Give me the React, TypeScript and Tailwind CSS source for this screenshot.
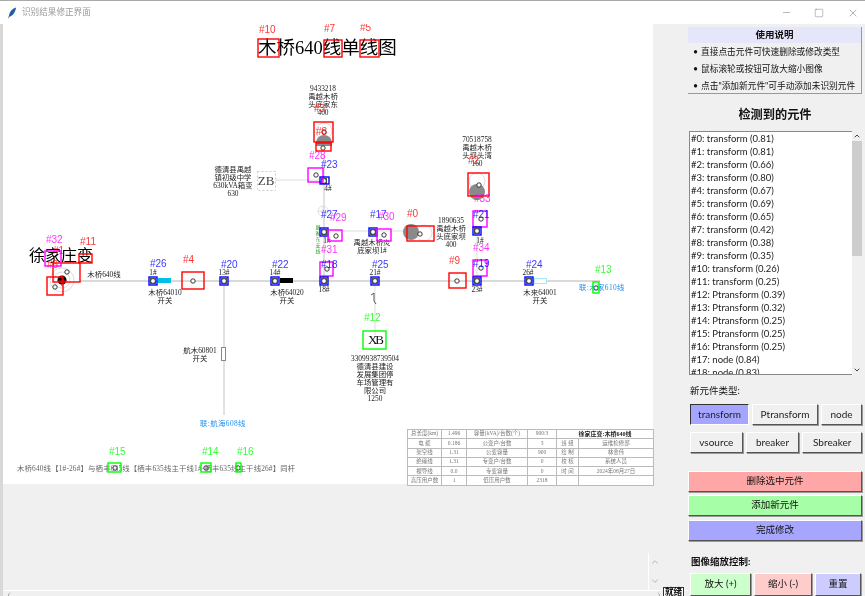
import { Minus, Square, X, ChevronUp, ChevronDown, ChevronLeft, ChevronRight } from 'lucide-react';

const RED = '#ff0000';
const MAGENTA = '#ff00ff';
const BLUE = '#0000ff';
const GREEN = '#00ff00';

// [label, colour, x0, y0, x1, y1, label x, label centre y] in page pixels
const boxes: [string, string, number, number, number, number, number, number][] = [
  ['#10', RED, 258, 39, 279, 57, 259, 29],
  ['#7', RED, 324, 40, 342, 57, 324, 28],
  ['#5', RED, 360, 40, 379, 57, 360, 27],
  ['#3', RED, 314, 122, 333, 142, 314, 108],
  ['#8', RED, 316, 143, 331, 151, 316, 131],
  ['#28', MAGENTA, 308, 168, 323, 182, 309, 155],
  ['#23', BLUE, 320, 177, 329, 184, 321, 164],
  ['#27', BLUE, 320, 228, 328, 236, 321, 214],
  ['#29', MAGENTA, 328, 230, 342, 241, 330, 217],
  ['#17', BLUE, 369, 228, 377, 236, 370, 214],
  ['#30', MAGENTA, 377, 229, 391, 241, 378, 216],
  ['#0', RED, 407, 226, 434, 241, 407, 213],
  ['#2', RED, 468, 173, 489, 196, 468, 160],
  ['#33', MAGENTA, 473, 211, 487, 227, 474, 198],
  ['#21', BLUE, 473, 227, 481, 235, 473, 214],
  ['#34', MAGENTA, 473, 260, 487, 276, 473, 247],
  ['#19', BLUE, 473, 277, 481, 285, 473, 263],
  ['#9', RED, 449, 273, 466, 288, 449, 260],
  ['#24', BLUE, 525, 277, 533, 285, 526, 264],
  ['#13', GREEN, 593, 282, 599, 293, 595, 269],
  ['#31', MAGENTA, 320, 262, 333, 276, 321, 249],
  ['#18', BLUE, 320, 277, 328, 285, 321, 264],
  ['#25', BLUE, 371, 277, 379, 285, 372, 264],
  ['#22', BLUE, 271, 277, 279, 285, 272, 264],
  ['#20', BLUE, 220, 277, 228, 285, 221, 264],
  ['#4', RED, 182, 272, 204, 289, 183, 259],
  ['#26', BLUE, 149, 277, 157, 285, 150, 263],
  ['#1', RED, 53, 263, 80, 282, 53, 250],
  ['#6', RED, 47, 277, 63, 295, 47, 264],
  ['#11', RED, 79, 254, 92, 263, 80, 241],
  ['#32', MAGENTA, 45, 251, 61, 266, 46, 239],
  ['#12', GREEN, 363, 331, 386, 349, 364, 317],
  ['#15', GREEN, 108, 463, 121, 472, 109, 451],
  ['#14', GREEN, 201, 463, 211, 472, 202, 451],
  ['#16', GREEN, 236, 463, 241, 472, 237, 451],
];

// [x centre, first line y, lines]
const captions: [number, number, string[]][] = [
  [323, 88, ['9433218', '禹越木桥', '头底家东', '400']],
  [233, 169, ['德清县禹越', '镇初级中学', '630kVA箱变', '630']],
  [477, 139, ['70518758', '禹越木桥', '头坝头湾', '160']],
  [451, 220, ['1890635', '禹越木桥', '头底家坝', '400']],
  [104, 274, ['木桥640线']],
  [165, 292, ['木桥64010', '开关']],
  [287, 292, ['木桥64020', '开关']],
  [372, 242, ['禹越木桥炎', '底家坝1#']],
  [540, 292, ['木来64001', '开关']],
  [200, 350, ['航木60801', '开关']],
  [375, 358, ['3309938739504', '德清县建设', '发展集团停', '车场管理有', '限公司', '1250']],
  [153, 272, ['1#']],
  [224, 272, ['13#']],
  [275, 272, ['14#']],
  [375, 272, ['21#']],
  [528, 272, ['26#']],
  [324, 289, ['18#']],
  [477, 289, ['23#']],
  [480, 240, ['1#']],
  [328, 188, ['4#']],
  [327, 240, ['1#']],
];

const dots: [number, number][] = [
  [316, 175], [336, 236], [384, 235], [327, 269], [481, 219], [481, 268],
  [115, 468], [206, 468], [238, 468], [596, 288], [324, 132], [323, 148],
  [479, 185], [420, 234], [67, 272], [55, 287], [193, 281], [457, 281],
];

const hubs: [number, number][] = [
  [324, 181], [324, 232], [373, 232], [477, 231], [477, 281], [529, 281],
  [324, 281], [375, 281], [275, 281], [224, 281], [153, 281],
];

const table = [
  ['总长度(km)', '1.496', '容量(kVA)/台数(个)', '900/3', '', ''],
  ['电 缆', '0.186', '公变户/台数', '3', '班 组', '运维检修部'],
  ['架空线', '1.31', '公变容量', '900', '绘 制', '林金伟'],
  ['绝缘线', '1.31', '专变户/台数', '0', '校 核', '系统人员'],
  ['裸导线', '0.0', '专变容量', '0', '时 间', '2024年08月27日'],
  ['高压用户数', '1', '低压用户数', '2318', '', ''],
];

const kinds = ['transform', 'transform', 'transform', 'transform', 'transform', 'transform', 'transform', 'transform', 'transform', 'transform', 'transform', 'transform', 'Ptransform', 'Ptransform', 'Ptransform', 'Ptransform', 'Ptransform', 'node', 'node'];
const scores = ['0.81', '0.81', '0.66', '0.80', '0.67', '0.69', '0.65', '0.42', '0.38', '0.35', '0.26', '0.25', '0.39', '0.32', '0.25', '0.25', '0.25', '0.84', '0.83'];

const raised = 'border border-t-white border-l-white border-r-[#555] border-b-[#555] shadow-[1px_1px_0_#999]';

function Diagram() {
  return (
    <svg viewBox="3 24 650 460" className="absolute inset-0 h-full w-full font-['Liberation_Serif','Noto_Sans_CJK_SC',serif]">
      {/* wires */}
      <g stroke="#c4c4c4" fill="none">
        <path d="M80 281H600" stroke="#b4b4b4" />
        <path d="M224 281V415" />
        <path d="M324 155V281" />
        <path d="M324 231H412" stroke="#ddd" />
        <path d="M477 235V281" stroke="#ddd" />
        <path d="M375 285V335" stroke="#ddd" />
        <path d="M275 180H320" stroke="#ddd" />
      </g>
      {/* switches */}
      <rect x="158" y="278" width="13" height="5" fill="#00bfe6" />
      <rect x="280" y="278" width="13" height="5" fill="#000" />
      <rect x="534.5" y="278.5" width="12" height="5" fill="#fff" stroke="#a6e8f5" />
      <rect x="221.5" y="347.5" width="4" height="13" fill="#fff" stroke="#888" />
      <rect x="257.5" y="171.5" width="18" height="19" fill="#fff" stroke="#ccc" strokeDasharray="2 2" />
      <text x="266" y="185" textAnchor="middle" fontSize="13" fill="#444">ZB</text>
      <text x="375" y="344" textAnchor="middle" fontSize="13" letterSpacing="-2" fill="#111">XB</text>
      {/* transformers */}
      <g fill="none" stroke="#ddd">
        <circle cx="62" cy="280" r="12" />
        <circle cx="62" cy="280" r="8" />
        <circle cx="324" cy="131" r="8" />
        <circle cx="477" cy="181" r="8" />
        <circle cx="424" cy="233" r="8" />
        <circle cx="323" cy="211" r="5" />
        <path d="M323 206V216M318 211H328" />
      </g>
      <circle cx="62" cy="280" r="4.5" fill="#000" />
      <path d="M57 281H67M62 276V286" stroke={RED} />
      <path d="M316 143a8 8 0 0 1 16 0v3h-16Z" fill="#8a8a8a" />
      <circle cx="477" cy="192" r="8" fill="#8a8a8a" />
      <circle cx="411" cy="232" r="8" fill="#8a8a8a" />
      <path d="M371 295l3-2v8l2 3" stroke="#555" fill="none" />
      {/* nodes */}
      {hubs.map(([x, y]) => (
        <g key={`${x}-${y}`}>
          <rect x={x - 3} y={y - 3} width="6" height="6" fill="#555" />
          <circle cx={x} cy={y} r="2.4" fill="#fff" stroke="#222" strokeWidth="0.8" />
        </g>
      ))}
      {dots.map(([x, y]) => (
        <circle key={`${x}-${y}`} cx={x} cy={y} r="2.2" fill="#fff" stroke="#222" strokeWidth="0.9" />
      ))}
      {/* big titles */}
      <text x="258" y="54" fontSize="18.5" fill="#000">木桥640线单线图</text>
      <text x="29" y="261" fontSize="16" fill="#000">徐家庄变</text>
      {/* captions */}
      <g fontSize="7.4" fill="#222" textAnchor="middle">
        {captions.map(([x, y, lines]) =>
          lines.map((line, i) => (
            <text key={`${x}-${y}-${i}`} x={x} y={y + i * 8 + 3}>{line}</text>
          )),
        )}
      </g>
      <g fontSize="5" fill="#2da52d" textAnchor="middle">
        {['屠', '家', '东', '支', '线'].map((c, i) => (
          <text key={c} x="318" y={229 + i * 6}>{c}</text>
        ))}
      </g>
      <g fontSize="7.4" fill="#1e8ff0">
        <text x="579" y="290" letterSpacing="0.4">联:木家610线</text>
        <text x="200" y="426" letterSpacing="0.4">联:航海608线</text>
      </g>
      <text x="17" y="471" fontSize="7.4" letterSpacing="0.15" fill="#666">木桥640线【1#-26#】与栖丰635线【栖丰635线主干线1#-栖丰635线主干线26#】同杆</text>
      {/* detection boxes */}
      <g fontFamily="'Liberation Sans', sans-serif" fontSize="10">
        {boxes.map(([label, color, x0, y0, x1, y1, lx, ly]) => (
          <g key={label}>
            <rect x={x0} y={y0} width={x1 - x0} height={y1 - y0} fill="none" stroke={color} strokeWidth="1.4" />
            <text x={lx} y={ly + 4} fill={color} fillOpacity="0.8">{label}</text>
          </g>
        ))}
      </g>
    </svg>
  );
}

function SummaryTable() {
  return (
    <table className="absolute left-[404px] top-[405px] w-[246px] table-fixed border-collapse bg-white text-center font-['Liberation_Serif','Noto_Sans_CJK_SC',serif] text-[5.5px] text-[#777]">
      <colgroup>
        <col className="w-[34px]" />
        <col className="w-[25px]" />
        <col className="w-[61px]" />
        <col className="w-[29px]" />
        <col className="w-[22px]" />
        <col className="w-[75px]" />
      </colgroup>
      <tbody>
        {table.map((row, r) => (
          <tr key={r} className="h-[9.3px]">
            {r === 0 ? (
              <>
                {row.slice(0, 4).map((c, i) => (
                  <td key={i} className="border border-[#bbb] p-0 leading-none">{c}</td>
                ))}
                <td colSpan={2} className="border border-[#bbb] p-0 text-[6px] leading-none font-bold text-[#222]">徐家庄变:木桥640线</td>
              </>
            ) : (
              row.map((c, i) => (
                <td key={i} className="border border-[#bbb] p-0 leading-none">{c}</td>
              ))
            )}
          </tr>
        ))}
      </tbody>
    </table>
  );
}

function TypeButton({ label, active, width }: { label: string; active?: boolean; width: string }) {
  return (
    <button
      className={`${width} flex h-[21px] items-center justify-center text-[10px] text-[#222] ${
        active
          ? 'border border-t-[#333] border-l-[#333] border-r-white border-b-white bg-[#a5a5ff]'
          : `${raised} bg-[#f0f0f0]`
      }`}
    >
      {label}
    </button>
  );
}

export default function App() {
  return (
    <div className="flex h-[596px] w-[865px] flex-col overflow-hidden border-t border-[#aaa] bg-[#f0f0f0] font-['Lato','Noto_Sans_CJK_SC',sans-serif] text-[#111] blur-[0.35px]">
      {/* title bar */}
      <div className="flex h-[23px] shrink-0 items-center bg-white pl-[8px]">
        <svg viewBox="0 0 10 12" className="h-[12px] w-[9px]">
          <path d="M9 0C5 1 2 4 1 9L0 12L2 10C6 9 8 5 9 0Z" fill="#1f5f9f" />
        </svg>
        <span className="ml-[5px] text-[8.6px] text-[#9a9a9a]">识别结果修正界面</span>
        <div className="ml-auto flex items-center text-[#666]">
          <Minus size={11} strokeWidth={1} className="mr-[22px]" />
          <Square size={10} strokeWidth={1} className="mr-[23px]" />
          <X size={12} strokeWidth={1} className="mr-[6px]" />
        </div>
      </div>

      <div className="flex min-h-0 flex-1">
        {/* canvas side */}
        <div className="flex w-[688px] shrink-0 flex-col border-l-[3px] border-[#d8d8d8]">
          <div className="relative h-[460px] w-[650px] shrink-0 bg-white">
            <Diagram />
            <SummaryTable />
          </div>
          <div className="h-[69px] shrink-0" />
          <div className="flex h-[37px] shrink-0">
            <div className="ml-[645px] flex w-[13px] flex-col items-center justify-between border-l border-white py-[4px] text-[#aaa]">
              <ChevronUp size={10} />
              <ChevronDown size={10} />
            </div>
          </div>
          <div className="flex flex-1 items-start border-t border-white text-[#888]">
            <ChevronLeft size={8} className="ml-[2px]" />
            <ChevronRight size={8} className="ml-[642px]" />
            <span className="-mt-[4px] border border-[#333] bg-white px-px text-[8.6px] leading-none font-bold text-[#111]">就绪</span>
          </div>
        </div>

        {/* right panel */}
        <div className="flex min-w-0 flex-1 flex-col pt-[3px] pr-[3px]">
          <div className="h-[67px] border-r border-b border-[#999] bg-[#f0f0f0] text-[8.7px]">
            <div className="flex h-[16px] items-center justify-center bg-[#e6e6fa] text-[9.5px] font-bold">使用说明</div>
            <div className="flex h-[17px] items-center pl-[5px]">• <span className="ml-[3px]">直接点击元件可快速删除或修改类型</span></div>
            <div className="flex h-[17px] items-center pl-[5px]">• <span className="ml-[3px]">鼠标滚轮或按钮可放大缩小图像</span></div>
            <div className="flex h-[17px] items-center pl-[5px]">• <span className="ml-[3px]">点击"添加新元件"可手动添加未识别元件</span></div>
          </div>

          <h2 className="mt-[13px] text-center text-[12.2px] leading-[16px] font-bold">检测到的元件</h2>

          <div className="mt-[8px] flex h-[244px] shrink-0">
            <ul className="ml-px w-[163px] overflow-hidden border border-[#888] border-r-0 bg-white text-[9.5px] leading-[13px] text-[#222]">
              {kinds.map((k, i) => (
                <li key={i} className="whitespace-nowrap pl-px">{`#${i}: ${k} (${scores[i]})`}</li>
              ))}
            </ul>
            <div className="flex w-[10px] flex-col items-center bg-[#f0f0f0]">
              <ChevronUp size={8} strokeWidth={3} className="my-px text-[#444]" />
              <div className="h-[115px] w-full bg-[#cdcdcd]" />
              <ChevronDown size={8} strokeWidth={3} className="mt-auto mb-px text-[#444]" />
            </div>
          </div>

          <div className="mt-[9px] pl-[2px] text-[9.5px] leading-[14px]">新元件类型:</div>

          <div className="mt-[6px] flex gap-[3px] pl-[2px]">
            <TypeButton label="transform" active width="w-[59px]" />
            <TypeButton label="Ptransform" width="w-[66px]" />
            <TypeButton label="node" width="w-[41px]" />
          </div>
          <div className="mt-[7px] flex gap-[3px] pl-[2px]">
            <TypeButton label="vsource" width="w-[53px]" />
            <TypeButton label="breaker" width="w-[54px]" />
            <TypeButton label="Sbreaker" width="w-[60px]" />
          </div>

          <button className={`mt-[18px] h-[21px] shrink-0 ${raised} bg-[#ffa6a6] text-[9.5px]`}>删除选中元件</button>
          <button className={`mt-[3px] h-[21px] shrink-0 ${raised} bg-[#a6ffa6] text-[9.5px]`}>添加新元件</button>
          <button className={`mt-[4px] h-[21px] shrink-0 ${raised} bg-[#a6a6ff] text-[9.5px]`}>完成修改</button>

          <div className="mt-[14px] pl-[3px] text-[9.5px] leading-[14px] font-bold">图像缩放控制:</div>

          <div className="mt-[4px] flex gap-[3px] pl-[2px]">
            <button className={`h-[23px] w-[61px] ${raised} bg-[#ccffcc] text-[9.5px]`}>放大 (+)</button>
            <button className={`h-[23px] w-[58px] ${raised} bg-[#ffcccc] text-[9.5px]`}>缩小 (-)</button>
            <button className={`h-[23px] w-[46px] ${raised} bg-[#ccccff] text-[9.5px]`}>重置</button>
          </div>
        </div>
      </div>
    </div>
  );
}
